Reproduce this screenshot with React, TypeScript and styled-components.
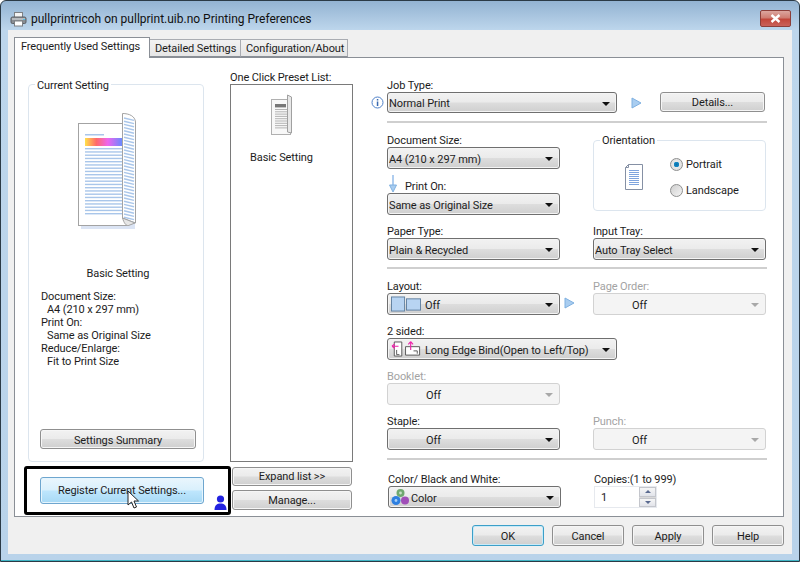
import React from "react";
import styled, { createGlobalStyle } from "styled-components";

const GlobalStyle = createGlobalStyle`
  html, body {
    margin: 0;
    padding: 0;
    background: #ffffff;
  }
  * {
    box-sizing: border-box;
  }
`;

const Window = styled.div`
  width: 800px;
  height: 562px;
  display: flex;
  flex-direction: column;
  overflow: hidden;
  border: 1px solid #2b3a46;
  border-radius: 6px 6px 0 0;
  box-shadow: inset 0 -1px 0 #3fb4c4;
  background: linear-gradient(180deg, #93b3d2 0, #bdd6ec 29px, #b9d3ea 100%);
  font-family: Roboto, "Liberation Sans", sans-serif;
  font-size: 11px;
  letter-spacing: -0.1px;
  color: #1c1c1c;
`;

const TitleBar = styled.div`
  height: 29px;
  flex: none;
  display: flex;
  align-items: center;
  padding: 6px 9px 0 9px;
  gap: 4px;
`;

const TitleText = styled.span`
  font-size: 12px;
  letter-spacing: 0;
  color: #101010;
  flex: 1;
`;

const CloseButton = styled.div`
  width: 31px;
  height: 17px;
  margin-right: -1px;
  display: flex;
  align-items: center;
  justify-content: center;
  border: 1px solid #8c3f3a;
  border-radius: 2px;
  background: linear-gradient(180deg, #dca69f 0, #cf7d72 45%, #c2463a 55%, #c9625a 100%);
`;

const Client = styled.div`
  height: 524px;
  margin: 0 7px;
  padding: 7px 8px 0 6px;
  background: #f0f0f0;
  display: flex;
  flex-direction: column;
`;

const TabRow = styled.div`
  height: 20px;
  display: flex;
  align-items: flex-end;
`;

const Tab = styled.div<{ $active?: boolean; $width: number }>`
  width: ${(p) => p.$width}px;
  height: ${(p) => (p.$active ? 21 : 18)}px;
  margin-bottom: ${(p) => (p.$active ? -1 : 0)}px;
  padding: ${(p) => (p.$active ? "0 0 3px 6px" : "0 0 0 5px")};
  display: flex;
  align-items: center;
  white-space: nowrap;
  position: relative;
  z-index: ${(p) => (p.$active ? 2 : 0)};
  border: 1px solid ${(p) => (p.$active ? "#8a8f96" : "#a9acb2")};
  border-bottom: ${(p) => (p.$active ? "none" : "1px solid #8a8f96")};
  border-left: ${(p) => (p.$active ? "1px solid #8a8f96" : "none")};
  background: ${(p) =>
    p.$active ? "#ffffff" : "linear-gradient(180deg, #f2f2f2 0, #e6e6e6 100%)"};
`;

const Panel = styled.div`
  height: 460px;
  flex: none;
  display: flex;
  padding: 13px 0 0 13px;
  background: #ffffff;
  border: 1px solid #8a8f96;
`;

const LeftColumn = styled.div`
  width: 176px;
  flex: none;
  margin-right: 26px;
  position: relative;
  z-index: 1;
`;

const GroupBox = styled.fieldset<{ $height: number }>`
  margin: 0;
  padding: 0;
  height: ${(p) => p.$height}px;
  border: 1px solid #dce5ee;
  border-radius: 4px;
  min-width: 0;
`;

const GroupLegend = styled.legend<{ $drop: number }>`
  margin-left: 6px;
  padding: ${(p) => p.$drop}px 2px 0;
  height: 14px;
  line-height: 14px;
`;

const CurrentSetting = styled(GroupBox)`
  margin-top: 6px;
`;

const BigArt = styled.div`
  margin: 22px 0 0 49px;
  height: 115px;
`;

const SettingName = styled.div`
  margin-top: 39px;
  padding-left: 4px;
  line-height: 13px;
  text-align: center;
`;

const SummaryList = styled.div`
  margin: 10px 0 0 12px;
  height: 78px;
  line-height: 13px;
`;

const SummaryValue = styled.div`
  padding-left: 6px;
`;

const HighlightBox = styled.div`
  width: 207px;
  height: 49px;
  margin: 4px 0 0 -4px;
  padding: 8px 0 0 13px;
  display: flex;
  align-items: flex-start;
  background: #ffffff;
  border: 3px solid #000000;
  border-radius: 3px;
`;

const PushButton = styled.div<{ $width: number; $height?: number }>`
  width: ${(p) => p.$width}px;
  height: ${(p) => p.$height ?? 20}px;
  flex: none;
  display: flex;
  align-items: center;
  justify-content: center;
  border: 1px solid #8f8f8f;
  border-radius: 3px;
  box-shadow: inset 0 0 0 1px #f6f6f6;
  background: linear-gradient(180deg, #f2f2f2 0, #ebebeb 48%, #dddddd 52%, #cfcfcf 100%);
`;

const SummaryButton = styled(PushButton)`
  margin: 61px 0 0 11px;
  padding-top: 2px;
`;

const RegisterButton = styled(PushButton)`
  position: relative;
  border-color: #6ea6cf;
  box-shadow: inset 0 0 0 1px #e6f5fd;
  background: linear-gradient(180deg, #eaf6fd 0, #d9f0fc 48%, #bee6fd 52%, #a7d9f5 100%);
`;

const CursorMark = styled.svg`
  position: absolute;
  left: 86px;
  top: 12px;
`;

const PersonIcon = styled.svg`
  margin: 18px 0 0 10px;
  flex: none;
`;

const MiddleColumn = styled.div`
  width: 123px;
  flex: none;
  margin-right: 34px;
  display: flex;
  flex-direction: column;
`;

const PresetLabel = styled.div`
  height: 13px;
  line-height: 13px;
  white-space: nowrap;
`;

const PresetList = styled.div`
  height: 378px;
  display: flex;
  flex-direction: column;
  align-items: center;
  padding: 9px 20px 0 0;
  border: 1px solid #7a7a7a;
`;

const PresetName = styled.div`
  margin-top: 15px;
  line-height: 13px;
`;

const ExpandButton = styled(PushButton)`
  margin: 5px 0 0 2px;
`;

const ManageButton = styled(PushButton)`
  margin: 4px 0 0 2px;
`;

const RightColumn = styled.div`
  width: 380px;
  flex: none;
  display: flex;
  flex-direction: column;
`;

const FieldLabel = styled.div<{ $off?: boolean }>`
  height: 14px;
  padding-top: 2px;
  line-height: 14px;
  display: flex;
  align-items: center;
  white-space: nowrap;
  color: ${(p) => (p.$off ? "#a3a3a3" : "#1c1c1c")};
`;

const Dropdown = styled.div<{ $off?: boolean; $width: number; $height: number; $indent: number }>`
  width: ${(p) => p.$width}px;
  height: ${(p) => p.$height}px;
  flex: none;
  display: flex;
  align-items: center;
  padding: 2px 6px 0 ${(p) => p.$indent}px;
  white-space: nowrap;
  border: 1px solid ${(p) => (p.$off ? "#d2d2d2" : "#6f6f6f")};
  border-radius: 3px;
  box-shadow: ${(p) => (p.$off ? "none" : "inset 0 0 0 1px #f4f4f4")};
  background: ${(p) =>
    p.$off
      ? "#f4f4f4"
      : "linear-gradient(180deg, #f2f2f2 0, #ebebeb 48%, #dddddd 52%, #cfcfcf 100%)"};
`;

const DropdownIcon = styled.svg<{ $before: number; $after: number }>`
  flex: none;
  margin-top: -2px;
  margin-left: ${(p) => p.$before}px;
  margin-right: ${(p) => p.$after}px;
`;

const DropdownText = styled.span`
  flex: 1;
`;

const DropdownArrow = styled.i<{ $off?: boolean }>`
  width: 0;
  height: 0;
  flex: none;
  border-left: 4px solid transparent;
  border-right: 4px solid transparent;
  border-top: 4px solid ${(p) => (p.$off ? "#a8a8a8" : "#101010")};
`;

const Divider = styled.div<{ $gap: number }>`
  height: 2px;
  flex: none;
  margin-top: ${(p) => p.$gap}px;
  background: #cfcfcf;
`;

const JobRow = styled.div`
  margin: 0 0 0 -16px;
  display: flex;
  align-items: flex-start;
`;

const InfoIcon = styled.svg`
  flex: none;
  margin: 4px 3px 0 0;
`;

const JobTriangle = styled.div`
  flex: none;
  display: flex;
  margin: 5px 18px 0 14px;
`;

const JobField = styled.div`
  margin-top: 7px;
`;

const Spaced = styled.div<{ $gap: number }>`
  margin-top: ${(p) => p.$gap}px;
`;

const PairRow = styled.div<{ $gap: number }>`
  margin-top: ${(p) => p.$gap}px;
  display: grid;
  grid-template-columns: 173px 33px 173px;
  & > :last-child {
    grid-column: 3;
  }
`;

const ArrowCell = styled.div`
  padding: 18px 0 0 4px;
`;

const OrientationBody = styled.div`
  display: flex;
  align-items: center;
  padding: 10px 0 0 30px;
`;

const OrientationIcon = styled.svg`
  flex: none;
  margin-right: 26px;
`;

const RadioList = styled.div`
  display: flex;
  flex-direction: column;
  gap: 12px;
`;

const RadioRow = styled.div`
  height: 14px;
  display: flex;
  align-items: center;
  gap: 3px;
`;

const RadioDot = styled.div<{ $on?: boolean }>`
  width: 13px;
  height: 13px;
  flex: none;
  border: 1px solid #8e8f8f;
  border-radius: 50%;
  background: ${(p) =>
    p.$on
      ? "radial-gradient(circle, #0a6fa8 0, #1a8cc8 34%, #e8e8e8 38%, #d8d8d8 100%)"
      : "linear-gradient(135deg, #cfcfcf 0, #f4f4f4 100%)"};
`;

const PrintOnArrow = styled.svg`
  margin: -6px 8px 0 2px;
  flex: none;
`;

const BottomRow = styled.div`
  margin: 12px 0 0 1px;
  display: grid;
  grid-template-columns: 173px 33px auto;
  & > :last-child {
    grid-column: 3;
  }
`;

const CopiesBox = styled.div`
  width: 63px;
  height: 22px;
  display: flex;
  align-items: center;
  padding-left: 6px;
  background: #ffffff;
  border: 1px solid #e6e9ee;
`;

const SpinColumn = styled.div`
  margin-left: auto;
  width: 17px;
  height: 20px;
  display: flex;
  flex-direction: column;
  gap: 1px;
  background: #d9d9d9;
`;

const SpinCell = styled.div<{ $up?: boolean }>`
  flex: 1;
  display: flex;
  align-items: center;
  justify-content: center;
  background: linear-gradient(180deg, #f6f6f6, #e2e4ea);
  border: 1px solid #c4c6cc;
  &::after {
    content: "";
    border-left: 3px solid transparent;
    border-right: 3px solid transparent;
    ${(p) =>
      p.$up ? "border-bottom: 3px solid #5a6a90;" : "border-top: 3px solid #5a6a90;"}
  }
`;

const Footer = styled.div`
  margin-top: 8px;
  padding-left: 458px;
  display: flex;
  gap: 8px;
  & > div {
    padding-top: 2px;
  }
`;

const DefaultButton = styled(PushButton)`
  border-color: #3c9fc8;
  box-shadow: inset 0 0 0 1px #c8eaf8;
`;

const jobOptions = {
  doc: "A4 (210 x 297 mm)",
  printOn: "Same as Original Size",
  paper: "Plain & Recycled",
  tray: "Auto Tray Select",
};

function Select(props: {
  text: string;
  width?: number;
  height?: number;
  indent?: number;
  off?: boolean;
  icon?: React.ReactNode;
}) {
  return (
    <Dropdown
      $off={props.off}
      $width={props.width ?? 173}
      $height={props.height ?? 22}
      $indent={props.indent ?? 1}
    >
      {props.icon}
      <DropdownText>{props.text}</DropdownText>
      <DropdownArrow $off={props.off} />
    </Dropdown>
  );
}

function Field(props: {
  label: string;
  text: string;
  off?: boolean;
  indent?: number;
  icon?: React.ReactNode;
  width?: number;
}) {
  return (
    <div>
      <FieldLabel $off={props.off}>{props.label}</FieldLabel>
      <Select
        text={props.text}
        off={props.off}
        indent={props.indent}
        icon={props.icon}
        width={props.width}
      />
    </div>
  );
}

function Triangle() {
  return (
    <svg width="11" height="12" viewBox="0 0 11 12">
      <path d="M1 1 L10 6 L1 11 Z" fill="#a9cdf0" stroke="#7fb0e0" />
    </svg>
  );
}

function PrinterIcon() {
  return (
    <svg width="17" height="16" viewBox="0 0 17 16">
      <rect x="4.5" y="1.5" width="8" height="6" fill="#f4f4f4" stroke="#7d8084" />
      <rect x="1" y="6" width="15" height="6.5" rx="1.5" fill="#8a8e93" stroke="#5a5e64" />
      <rect x="2" y="7" width="13" height="2" fill="#b8bcc0" />
      <rect x="4.5" y="10" width="8" height="5" fill="#ffffff" stroke="#7d8084" />
      <rect x="13" y="8" width="2" height="1" fill="#4fc0e8" />
    </svg>
  );
}

function BigDocument() {
  const rows = Array.from({ length: 21 }, (_, i) => 32 + i * 3.25);
  const slats = Array.from({ length: 33 }, (_, i) => 5 + i * 3.2);
  return (
    <svg width="60" height="116" viewBox="0 0 60 116">
      <defs>
        <linearGradient id="rainbow" x1="0" x2="1" y1="0" y2="0">
          <stop offset="0" stopColor="#ffe14a" />
          <stop offset="0.3" stopColor="#ff6a6a" />
          <stop offset="0.6" stopColor="#ee66ee" />
          <stop offset="1" stopColor="#5f8cff" />
        </linearGradient>
      </defs>
      <rect x="3" y="13" width="54" height="103" fill="#dbe4f4" />
      <rect x="0.5" y="10.5" width="50" height="102" fill="#ffffff" stroke="#a3a3a3" />
      <rect x="7" y="21" width="19" height="1.5" fill="#a9c6ea" />
      <rect x="7" y="25" width="38" height="8" fill="url(#rainbow)" />
      {rows.map((y) => (
        <rect key={y} x="7" y={y + 3} width="38" height="1.4" fill="#a9c6ea" />
      ))}
      <path
        d="M44.5 0.5 C51 0.5 57 3 57.5 9 L57.5 110 L44.5 105 Z"
        fill="#ffffff"
        stroke="#a3a3a3"
      />
      {slats.map((y) => (
        <path key={y} d={`M46 ${y} L56 ${y + 2.4}`} stroke="#a9c6ea" strokeWidth="1.4" />
      ))}
      <path d="M44.5 105 C46 110 48 113 50.5 112.5 L57 110 Z" fill="#e6e6e6" stroke="#a3a3a3" />
    </svg>
  );
}

function SmallDocument() {
  const rows = Array.from({ length: 9 }, (_, i) => 15 + i * 2.3);
  return (
    <svg width="23" height="42" viewBox="0 0 23 42">
      <rect x="1.5" y="5.5" width="19" height="35" fill="#f8f8f8" stroke="#b0b0b0" />
      <rect x="5" y="10" width="11" height="3.4" fill="#777777" />
      {rows.map((y) => (
        <rect key={y} x="5" y={y} width="12" height="1" fill="#b4b4b4" />
      ))}
      <path d="M17.5 1 L21.5 3 L21.5 39 L17.5 38 Z" fill="#e8e8e8" stroke="#a0a0a0" />
    </svg>
  );
}

function PortraitIcon() {
  return (
    <OrientationIcon width="20" height="26" viewBox="0 0 20 26">
      <path d="M4.5 0.5 H18.5 V25.5 H1.5 V3.5 Z" fill="#ffffff" stroke="#8590a4" />
      <path d="M1.5 3.5 H4.5 V0.5" fill="none" stroke="#8590a4" />
      {[6, 8, 10, 12, 14, 16, 18, 20].map((y) => (
        <rect key={y} x="5" y={y} width="10" height="1" fill="#7ea4de" />
      ))}
    </OrientationIcon>
  );
}

function LayoutIcons() {
  return (
    <DropdownIcon $before={2} $after={4} width="30" height="16" viewBox="0 0 32 16">
      <rect x="0.5" y="0.5" width="14" height="15" fill="#b8d4f2" stroke="#5f7f9f" />
      <rect x="16.5" y="2.5" width="15" height="12" fill="#b8d4f2" stroke="#5f7f9f" />
    </DropdownIcon>
  );
}

function DuplexIcons() {
  return (
    <DropdownIcon $before={2} $after={4} width="30" height="18" viewBox="0 0 32 18">
      <path d="M3.5 1.5 H11.5 V16.5 H3.5 Z" fill="#ffffff" stroke="#555555" />
      <path d="M1 6 H8 M1 6 L4 3.5 M1 6 L4 8.5" fill="none" stroke="#ee22aa" strokeWidth="1.2" />
      <path d="M6 10 V15 H9" fill="none" stroke="#555555" />
      <path d="M15.5 6.5 H30.5 V15.5 H15.5 Z" fill="#ffffff" stroke="#555555" />
      <path d="M21 10 V1 M21 1 L18.5 4 M21 1 L23.5 4" fill="none" stroke="#ee22aa" strokeWidth="1.2" />
      <path d="M24 11 H28 V14" fill="none" stroke="#555555" />
    </DropdownIcon>
  );
}

function ColorIcon() {
  return (
    <DropdownIcon $before={1} $after={1} width="19" height="18" viewBox="0 0 19 18">
      <circle cx="9.5" cy="5" r="4" fill="#6fa86f" />
      <circle cx="5" cy="12.5" r="4.5" fill="#2e7fe0" />
      <circle cx="14" cy="12.5" r="4" fill="#a04fb8" />
      <circle cx="9.5" cy="5" r="1.4" fill="#c8e0c8" />
      <circle cx="5" cy="12.5" r="1.4" fill="#a8d0f8" />
    </DropdownIcon>
  );
}

export default function App() {
  return (
    <>
      <GlobalStyle />
      <Window>
        <TitleBar>
          <PrinterIcon />
          <TitleText>pullprintricoh on pullprint.uib.no Printing Preferences</TitleText>
          <CloseButton>
            <svg width="11" height="9" viewBox="0 0 11 9">
              <path d="M1.5 1 L9.5 8 M9.5 1 L1.5 8" stroke="#ffffff" strokeWidth="2.4" />
            </svg>
          </CloseButton>
        </TitleBar>
        <Client>
          <TabRow>
            <Tab $active $width={136}>Frequently Used Settings</Tab>
            <Tab $width={91}>Detailed Settings</Tab>
            <Tab $width={107}>Configuration/About</Tab>
          </TabRow>
          <Panel>
            <LeftColumn>
              <CurrentSetting $height={385}>
                <GroupLegend $drop={2}>Current Setting</GroupLegend>
                <BigArt>
                  <BigDocument />
                </BigArt>
                <SettingName>Basic Setting</SettingName>
                <SummaryList>
                  <div>Document Size:</div>
                  <SummaryValue>{jobOptions.doc}</SummaryValue>
                  <div>Print On:</div>
                  <SummaryValue>{jobOptions.printOn}</SummaryValue>
                  <div>Reduce/Enlarge:</div>
                  <SummaryValue>Fit to Print Size</SummaryValue>
                </SummaryList>
                <SummaryButton $width={156}>Settings Summary</SummaryButton>
              </CurrentSetting>
              <HighlightBox>
                <RegisterButton $width={164} $height={27}>
                  Register Current Settings...
                  <CursorMark width="12" height="20" viewBox="0 0 12 20">
                    <path
                      d="M1 1 V15 L4.5 12 L7 18 L9.5 17 L7 11 H11.5 Z"
                      fill="#ffffff"
                      stroke="#222222"
                    />
                  </CursorMark>
                </RegisterButton>
                <PersonIcon width="13" height="15" viewBox="0 0 13 15">
                  <circle cx="6.5" cy="4" r="3.6" fill="#2222e0" />
                  <path d="M0.5 15 C0.5 10 3 8.5 6.5 8.5 C10 8.5 12.5 10 12.5 15 Z" fill="#2222e0" />
                </PersonIcon>
              </HighlightBox>
            </LeftColumn>
            <MiddleColumn>
              <PresetLabel>One Click Preset List:</PresetLabel>
              <PresetList>
                <SmallDocument />
                <PresetName>Basic Setting</PresetName>
              </PresetList>
              <ExpandButton $width={120} $height={19}>Expand list &gt;&gt;</ExpandButton>
              <ManageButton $width={120}>Manage...</ManageButton>
            </MiddleColumn>
            <RightColumn>
              <JobField>
                <FieldLabel>Job Type:</FieldLabel>
                <JobRow>
                  <InfoIcon width="13" height="13" viewBox="0 0 13 13">
                    <circle cx="6.5" cy="6.5" r="5.5" fill="#ffffff" stroke="#4f81c8" />
                    <rect x="5.8" y="5.5" width="1.5" height="4.5" fill="#3a6ab0" />
                    <rect x="5.8" y="3" width="1.5" height="1.5" fill="#3a6ab0" />
                  </InfoIcon>
                  <Select text="Normal Print" width={230} height={21} />
                  <JobTriangle>
                    <Triangle />
                  </JobTriangle>
                  <PushButton $width={105}>Details...</PushButton>
                </JobRow>
              </JobField>
              <Divider $gap={8} />
              <PairRow $gap={10}>
                <div>
                  <Field label="Document Size:" text={jobOptions.doc} />
                  <Spaced $gap={10}>
                    <FieldLabel>
                      <PrintOnArrow width="8" height="18" viewBox="0 0 8 18">
                        <path d="M4 0 V10" stroke="#8db8e8" strokeWidth="1.4" />
                        <path d="M0.5 10 H7.5 L4 17 Z" fill="#a9cdf0" stroke="#7fb0e0" />
                      </PrintOnArrow>
                      Print On:
                    </FieldLabel>
                    <Select text={jobOptions.printOn} />
                  </Spaced>
                </div>
                <GroupBox $height={78}>
                  <GroupLegend $drop={1}>Orientation</GroupLegend>
                  <OrientationBody>
                    <PortraitIcon />
                    <RadioList>
                      <RadioRow>
                        <RadioDot $on />
                        Portrait
                      </RadioRow>
                      <RadioRow>
                        <RadioDot />
                        Landscape
                      </RadioRow>
                    </RadioList>
                  </OrientationBody>
                </GroupBox>
              </PairRow>
              <PairRow $gap={9}>
                <Field label="Paper Type:" text={jobOptions.paper} />
                <Field label="Input Tray:" text={jobOptions.tray} />
              </PairRow>
              <Divider $gap={7} />
              <PairRow $gap={10}>
                <Field label="Layout:" text="Off" icon={<LayoutIcons />} />
                <ArrowCell>
                  <Triangle />
                </ArrowCell>
                <Field label="Page Order:" text="Off" off indent={38} />
              </PairRow>
              <Spaced $gap={9}>
                <Field
                  label="2 sided:"
                  text="Long Edge Bind(Open to Left/Top)"
                  width={230}
                  icon={<DuplexIcons />}
                />
              </Spaced>
              <Spaced $gap={9}>
                <Field label="Booklet:" text="Off" off indent={38} />
              </Spaced>
              <PairRow $gap={9}>
                <Field label="Staple:" text="Off" indent={38} />
                <Field label="Punch:" text="Off" off indent={38} />
              </PairRow>
              <Divider $gap={8} />
              <BottomRow>
                <Field label="Color/ Black and White:" text="Color" icon={<ColorIcon />} />
                <div>
                  <FieldLabel>Copies:(1 to 999)</FieldLabel>
                  <CopiesBox>
                    1
                    <SpinColumn>
                      <SpinCell $up />
                      <SpinCell />
                    </SpinColumn>
                  </CopiesBox>
                </div>
              </BottomRow>
            </RightColumn>
          </Panel>
          <Footer>
            <DefaultButton $width={72} $height={21}>OK</DefaultButton>
            <PushButton $width={72} $height={21}>Cancel</PushButton>
            <PushButton $width={72} $height={21}>Apply</PushButton>
            <PushButton $width={72} $height={21}>Help</PushButton>
          </Footer>
        </Client>
      </Window>
    </>
  );
}
